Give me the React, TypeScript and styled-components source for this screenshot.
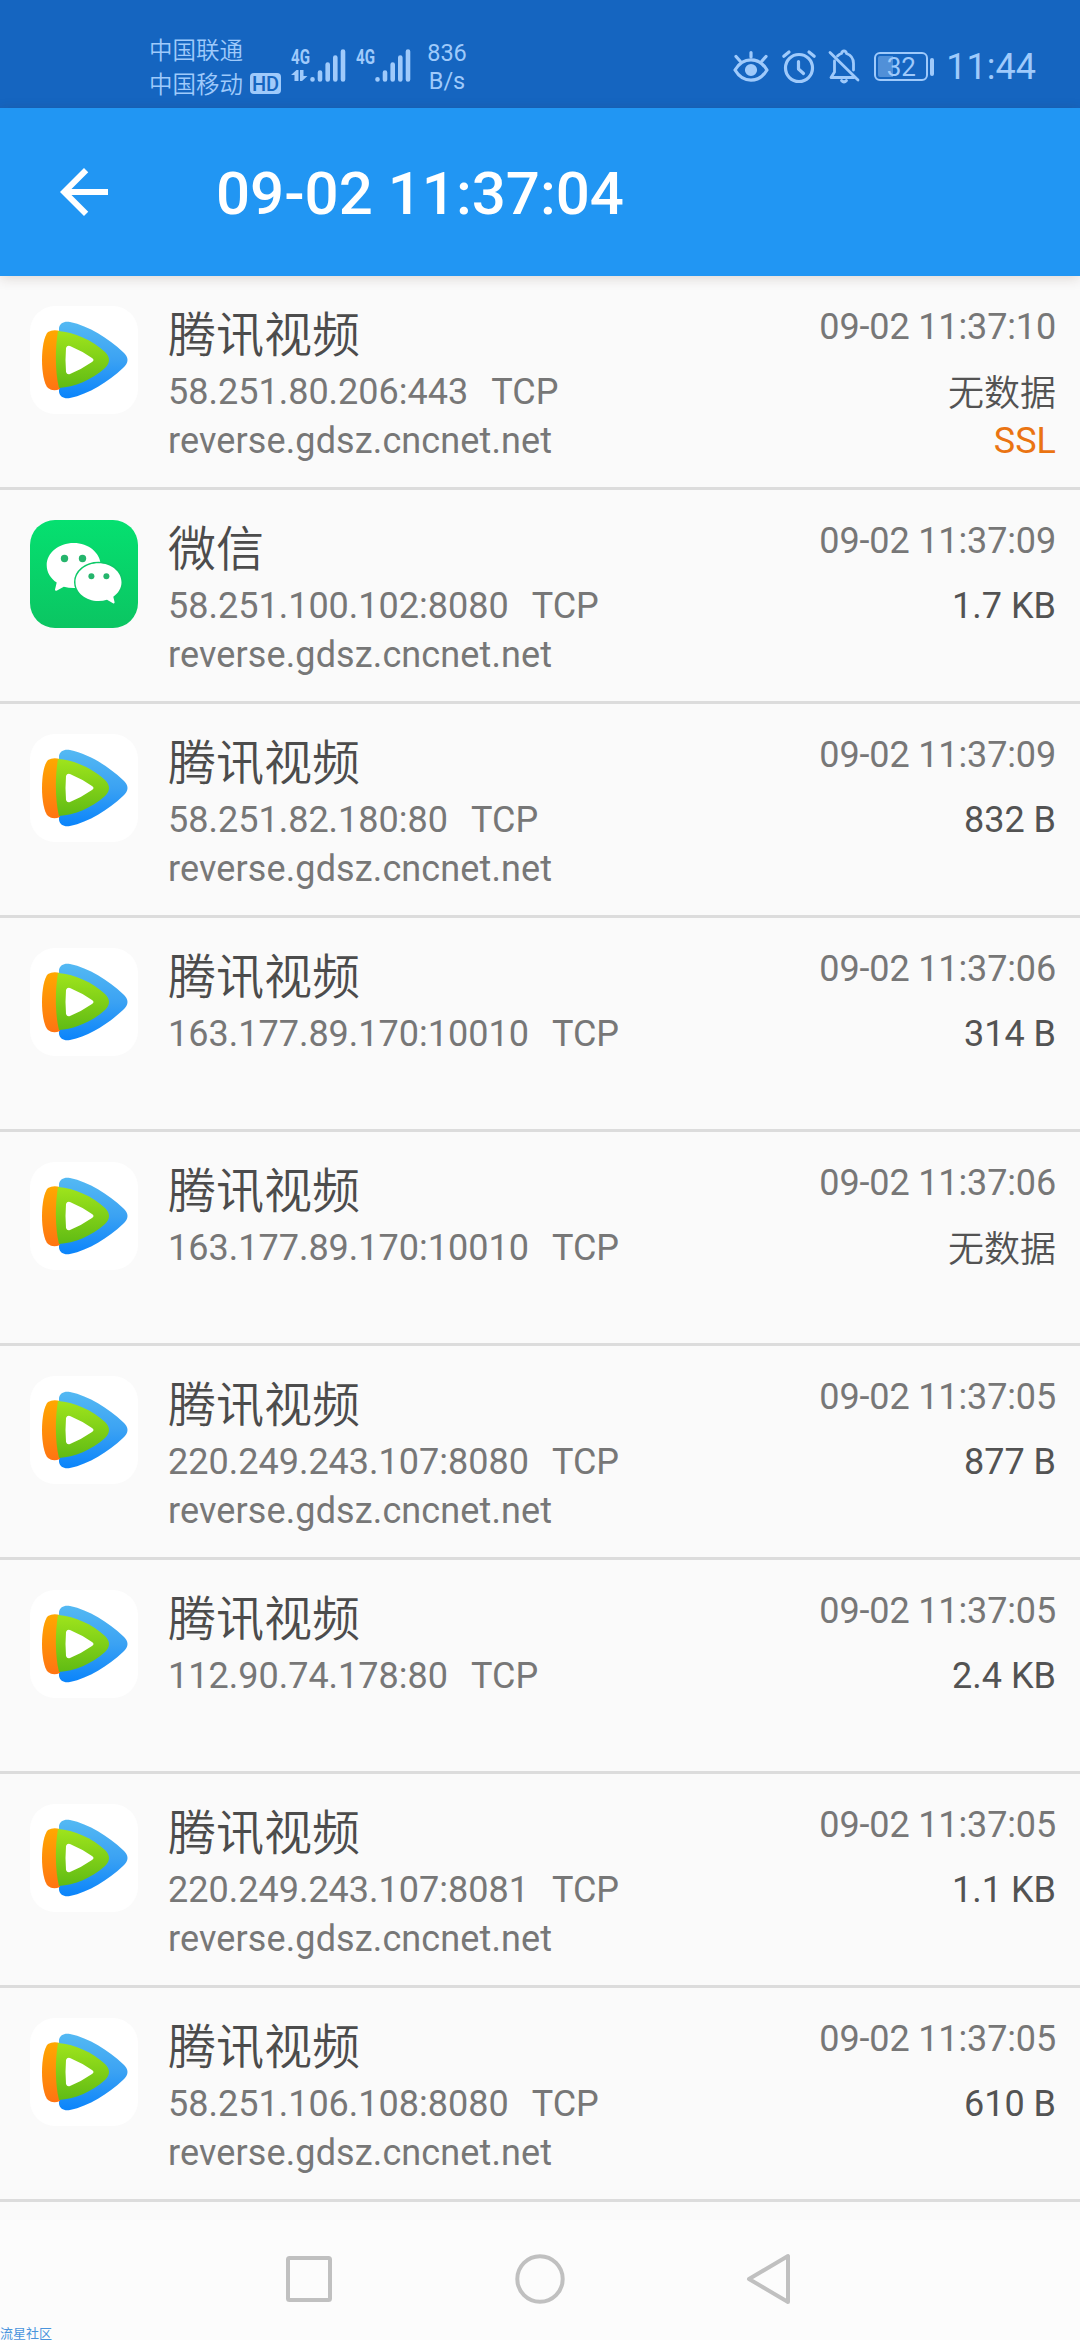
import React from "react";
import styled, { createGlobalStyle } from "styled-components";

const GlobalStyle = createGlobalStyle`
  * { box-sizing: border-box; }
  body {
    margin: 0;
    background: #fafafa;
    font-family: Roboto, "Noto Sans CJK SC", sans-serif;
  }
`;

const STATUS_TINT = "#9fcafb";

const Screen = styled.div`
  position: relative;
  display: flex;
  flex-direction: column;
  width: 1080px;
  height: 2340px;
  overflow: hidden;
  background: #fafafa;
`;

const StatusBar = styled.header`
  display: flex;
  justify-content: space-between;
  height: 108px;
  padding: 0 44px 0 149px;
  background: #1565c0;
  color: ${STATUS_TINT};
`;

const StatusGroup = styled.div`
  display: flex;
  align-items: flex-start;
`;

const Carriers = styled.div`
  display: flex;
  flex-direction: column;
  padding-top: 32px;
  font-family: "Noto Sans CJK SC DemiLight", Roboto, "Noto Sans CJK SC", sans-serif;
  font-size: 23.5px;
  font-weight: 350;
  line-height: 34px;
`;

const CarrierLine = styled.div`
  display: flex;
  align-items: center;
  gap: 7px;
  height: 34px;
  white-space: nowrap;
`;

const HdBadge = styled.span`
  width: 31px;
  height: 21px;
  border-radius: 4px;
  background: ${STATUS_TINT};
  color: #1565c0;
  font-family: Roboto, sans-serif;
  font-size: 20px;
  font-weight: 500;
  line-height: 22px;
  text-align: center;
`;

const Signal = styled.div<{ $left: number }>`
  display: flex;
  width: 56px;
  height: 34px;
  margin: 49px 0 0 ${(p) => p.$left}px;
`;

const SignalLabel = styled.div`
  display: flex;
  flex-direction: column;
  width: 19px;
  font-size: 21px;
  font-weight: 700;
  line-height: 16px;

  span {
    height: 19px;
    transform: scaleX(0.72);
    transform-origin: left;
  }
`;

const Speed = styled.div`
  width: 42px;
  margin: 39px 0 0 14px;
  font-size: 23.5px;
  line-height: 28px;
  text-align: center;
`;

const StatusIcon = styled.svg<{ $gap: number }>`
  flex: none;
  width: 36px;
  height: 36px;
  margin: 49px ${(p) => p.$gap}px 0 0;
`;

const Battery = styled.div`
  display: flex;
  align-items: center;
  gap: 2px;
  margin: 52px 12px 0 0;

  &::after {
    content: "";
    width: 4px;
    height: 18px;
    border-radius: 2px;
    background: ${STATUS_TINT};
  }
`;

const BatteryBody = styled.div<{ $level: number }>`
  width: 54px;
  height: 29px;
  border: 2px solid ${STATUS_TINT};
  border-radius: 6px;
  background: linear-gradient(
      to right,
      #5190d8 ${(p) => p.$level}%,
      transparent ${(p) => p.$level}%
    )
    content-box;
  padding: 2px;
  font-size: 26px;
  line-height: 22px;
  text-align: center;
`;

const Clock = styled.div`
  margin-top: 46px;
  font-size: 36px;
  line-height: 42px;
`;

const AppBar = styled.div`
  position: relative;
  display: flex;
  flex: none;
  align-items: center;
  height: 168px;
  padding-left: 48px;
  background: #2196f3;
  box-shadow: 0 2px 12px rgba(60, 30, 0, 0.16);
`;

const BackIcon = styled.svg`
  width: 72px;
  height: 72px;
`;

const Title = styled.h1`
  margin: 4px 0 0 96px;
  color: #fff;
  font-size: 60px;
  font-weight: 500;
  line-height: 70px;
  white-space: nowrap;
`;

const List = styled.main`
  display: flex;
  flex: 1;
  flex-direction: column;
`;

const Row = styled.article`
  display: flex;
  flex: none;
  height: 214px;
  padding: 30px 24px 0 30px;
  border-bottom: 3px solid #dcdcdc;
`;

const AppIcon = styled.svg`
  flex: none;
  width: 108px;
  height: 108px;
`;

const Details = styled.div`
  display: flex;
  flex: 1;
  flex-direction: column;
  margin-left: 30px;
`;

const Name = styled.div`
  height: 62px;
  color: #4c4c4c;
  font-family: "Noto Sans CJK SC DemiLight", "Noto Sans CJK SC", sans-serif;
  font-size: 48px;
  font-weight: 350;
  line-height: 51px;
`;

const Line = styled.div<{ $color?: string }>`
  display: flex;
  gap: 23px;
  color: ${(p) => p.$color ?? "#777"};
  font-size: 36px;
  line-height: 49px;
  white-space: nowrap;
`;

const Host = styled(Line)`
  letter-spacing: 0.12px;
`;

const Meta = styled.div`
  display: flex;
  flex-direction: column;
  align-items: flex-end;
`;

const Time = styled.div`
  margin-bottom: 20px;
  color: #777;
  font-size: 36px;
  letter-spacing: -0.14px;
  line-height: 42px;
`;

const Empty = styled.span`
  height: 49px;
  font-family: "Noto Sans CJK SC DemiLight", "Noto Sans CJK SC", sans-serif;
  font-weight: 350;
  line-height: 44px;
`;

const NavBar = styled.nav`
  display: flex;
  flex: none;
  justify-content: center;
  gap: 171px;
  height: 120px;
  padding-top: 29px;
  background: #fcfcfc;
`;

const NavIcon = styled.svg`
  width: 60px;
  height: 60px;
  fill: none;
  stroke: #c0c0c0;
  stroke-width: 4;
  stroke-linejoin: round;
`;

const Watermark = styled.div`
  position: absolute;
  bottom: -3px;
  left: 0;
  color: #4a94dc;
  font-size: 13px;
  line-height: 18px;
`;

function SignalMeter({ left, arrows }: { left: number; arrows?: boolean }) {
  return (
    <Signal $left={left}>
      <SignalLabel>
        <span>4G</span>
        {arrows && (
          <svg width="18" height="14" viewBox="0 0 18 14" fill={STATUS_TINT}>
            <path d="M3.500 13V7H0l5.500-5h2v11zM9 2h3.500v6h4l-5.500 5H9z" />
          </svg>
        )}
      </SignalLabel>
      <svg width="37" height="34" viewBox="0 0 37 34" stroke={STATUS_TINT} strokeWidth="4.6" strokeLinecap="round">
        <path d="M2.500 30.200v.2M10 23.500v7M17.700 15.500v15M25.300 8.500v22M33 2.500v28" />
      </svg>
    </Signal>
  );
}

function VideoIcon() {
  return (
    <AppIcon viewBox="0 0 108 108">
      <defs>
        <linearGradient id="videoBlue" x1="0" y1="0" x2="0" y2="1">
          <stop offset="0" stopColor="#54b9f3" />
          <stop offset="0.5" stopColor="#3ba2f3" />
          <stop offset="1" stopColor="#0a84fb" />
        </linearGradient>
        <linearGradient id="videoOrange" x1="0" y1="0" x2="0" y2="1">
          <stop offset="0" stopColor="#ffa800" />
          <stop offset="1" stopColor="#ff7412" />
        </linearGradient>
        <linearGradient id="videoGreen" x1="0" y1="0" x2="0" y2="1">
          <stop offset="0" stopColor="#9fe41c" />
          <stop offset="1" stopColor="#60bb14" />
        </linearGradient>
      </defs>
      <rect width="108" height="108" rx="25" fill="#fff" />
      <path
        d="M29 22C30 17 34 15 40 16C59 20 78 32 93 46Q102 54 93 62C78 76 59 88 40 92C34 93 30 91 29 86Z"
        fill="url(#videoBlue)"
      />
      <path d="M30 25Q23 23 18 26C10 34 10 74 18 82Q23 86 30 83Z" fill="url(#videoOrange)" />
      <path d="M28 25C44 26 62 34 75 46Q83 54 75 62C62 74 44 81 29 82C25 66 25 42 28 25Z" fill="url(#videoGreen)" />
      <path d="M36 42Q37 39 40 40Q52 45 62 52Q65 54 62 56Q52 63 40 68Q37 69 36 66Q35 54 36 42Z" fill="#fff" />
    </AppIcon>
  );
}

function WeChatIcon() {
  return (
    <AppIcon viewBox="0 0 108 108">
      <defs>
        <linearGradient id="wechatGreen" x1="0" y1="0" x2="0" y2="1">
          <stop offset="0" stopColor="#05e070" />
          <stop offset="1" stopColor="#0bc562" />
        </linearGradient>
      </defs>
      <rect width="108" height="108" rx="25" fill="url(#wechatGreen)" />
      <path
        d="M43.700 23C28.800 23 16.700 32.800 16.700 45.200C16.700 52.200 20.500 58.400 26.700 62.500L25 69.500Q25 71.500 27 70.500L33.800 66.700Q38.500 68 43.700 68C58.600 68 70.700 58 70.700 45.500S58.600 23 43.700 23Z"
        fill="#fff"
      />
      <path
        d="M68.500 43.200C81.200 43.200 91.500 51.700 91.500 62.200C91.500 68 88.300 73.200 83.300 76.700L84.600 82.300Q84.600 84 83 83.200L77 79.800Q73 81 68.500 81C55.800 81 45.500 72.700 45.500 62.200S55.800 43.200 68.500 43.200Z"
        fill="#fff"
        stroke="#0dc968"
        strokeWidth="3"
        paintOrder="stroke"
      />
      <g fill="#25b56c">
        <circle cx="34.500" cy="38.500" r="3.700" />
        <circle cx="52.500" cy="38.500" r="3.700" />
        <circle cx="61.400" cy="56.300" r="3" />
        <circle cx="76.400" cy="56.300" r="3" />
      </g>
    </AppIcon>
  );
}

type Connection = {
  app?: "wechat";
  address: string;
  host?: boolean;
  time: string;
  size?: string;
  ssl?: boolean;
};

const connections: Connection[] = [
  { address: "58.251.80.206:443", host: true, time: "10", ssl: true },
  { app: "wechat", address: "58.251.100.102:8080", host: true, time: "09", size: "1.7 KB" },
  { address: "58.251.82.180:80", host: true, time: "09", size: "832 B" },
  { address: "163.177.89.170:10010", time: "06", size: "314 B" },
  { address: "163.177.89.170:10010", time: "06" },
  { address: "220.249.243.107:8080", host: true, time: "05", size: "877 B" },
  { address: "112.90.74.178:80", time: "05", size: "2.4 KB" },
  { address: "220.249.243.107:8081", host: true, time: "05", size: "1.1 KB" },
  { address: "58.251.106.108:8080", host: true, time: "05", size: "610 B" },
];

function ConnectionRow({ item }: { item: Connection }) {
  const wechat = item.app === "wechat";
  return (
    <Row>
      {wechat ? <WeChatIcon /> : <VideoIcon />}
      <Details>
        <Name>{wechat ? "微信" : "腾讯视频"}</Name>
        <Line>
          <span>{item.address}</span>
          <span>TCP</span>
        </Line>
        {item.host && <Host>reverse.gdsz.cncnet.net</Host>}
      </Details>
      <Meta>
        <Time>{`09-02 11:37:${item.time}`}</Time>
        <Line $color="#535353">{item.size ?? <Empty>无数据</Empty>}</Line>
        {item.ssl && <Line $color="#ea7412">SSL</Line>}
      </Meta>
    </Row>
  );
}

export default function App() {
  return (
    <Screen>
      <GlobalStyle />
      <StatusBar>
        <StatusGroup>
          <Carriers>
            <CarrierLine>中国联通</CarrierLine>
            <CarrierLine>
              中国移动<HdBadge>HD</HdBadge>
            </CarrierLine>
          </Carriers>
          <SignalMeter left={10} arrows />
          <SignalMeter left={9} />
          <Speed>
            836
            <br />
            B/s
          </Speed>
        </StatusGroup>
        <StatusGroup>
          <StatusIcon $gap={12} viewBox="0 0 36 36" fill="none" stroke={STATUS_TINT} strokeWidth="3.200" strokeLinecap="round" strokeLinejoin="round">
            <path d="M2 21C10 7.500 26 7.500 34 21C26 34.500 10 34.500 2 21Z" />
            <path d="M18 8V3.500M7 12L3 7.500M29 12l4-4.500" />
            <circle cx="18" cy="21" r="4.500" fill={STATUS_TINT} />
          </StatusIcon>
          <StatusIcon $gap={9} viewBox="0 0 36 36" fill="none" stroke={STATUS_TINT} strokeWidth="3.200" strokeLinecap="round" strokeLinejoin="round">
            <circle cx="18" cy="19" r="13.500" />
            <path d="M17.500 12.500V20l5 4.500M2.800 7.200L8 3M28 3l5.200 4.200" />
          </StatusIcon>
          <StatusIcon $gap={12} viewBox="0 0 36 36" fill="none" stroke={STATUS_TINT} strokeWidth="2.800" strokeLinecap="round" strokeLinejoin="round">
            <path d="M4 3.500L32 31" />
            <path d="M8.500 12V23L5 28.500H28M11.500 7Q13.500 5 15.500 4.500Q16 2 18 2T20.500 4.500Q27.500 7 27.500 14.500V21" />
            <path d="M15.500 31.500Q18 34.500 20.500 31.500" fill={STATUS_TINT} />
          </StatusIcon>
          <Battery>
            <BatteryBody $level={32}>32</BatteryBody>
          </Battery>
          <Clock>11:44</Clock>
        </StatusGroup>
      </StatusBar>
      <AppBar>
        <BackIcon viewBox="0 0 24 24" fill="#fff">
          <path d="M20 11H7.830l5.590-5.590L12 4l-8 8 8 8 1.410-1.410L7.830 13H20v-2z" />
        </BackIcon>
        <Title>09-02 11:37:04</Title>
      </AppBar>
      <List>
        {connections.map((item, index) => (
          <ConnectionRow key={index} item={item} />
        ))}
      </List>
      <NavBar>
        <NavIcon viewBox="0 0 60 60">
          <rect x="9" y="9" width="42" height="42" rx="1.500" />
        </NavIcon>
        <NavIcon viewBox="0 0 60 60">
          <circle cx="30" cy="30" r="22.700" />
        </NavIcon>
        <NavIcon viewBox="0 0 60 60">
          <path d="M8 30L47 7V53Z" />
        </NavIcon>
      </NavBar>
      <Watermark>流星社区</Watermark>
    </Screen>
  );
}
